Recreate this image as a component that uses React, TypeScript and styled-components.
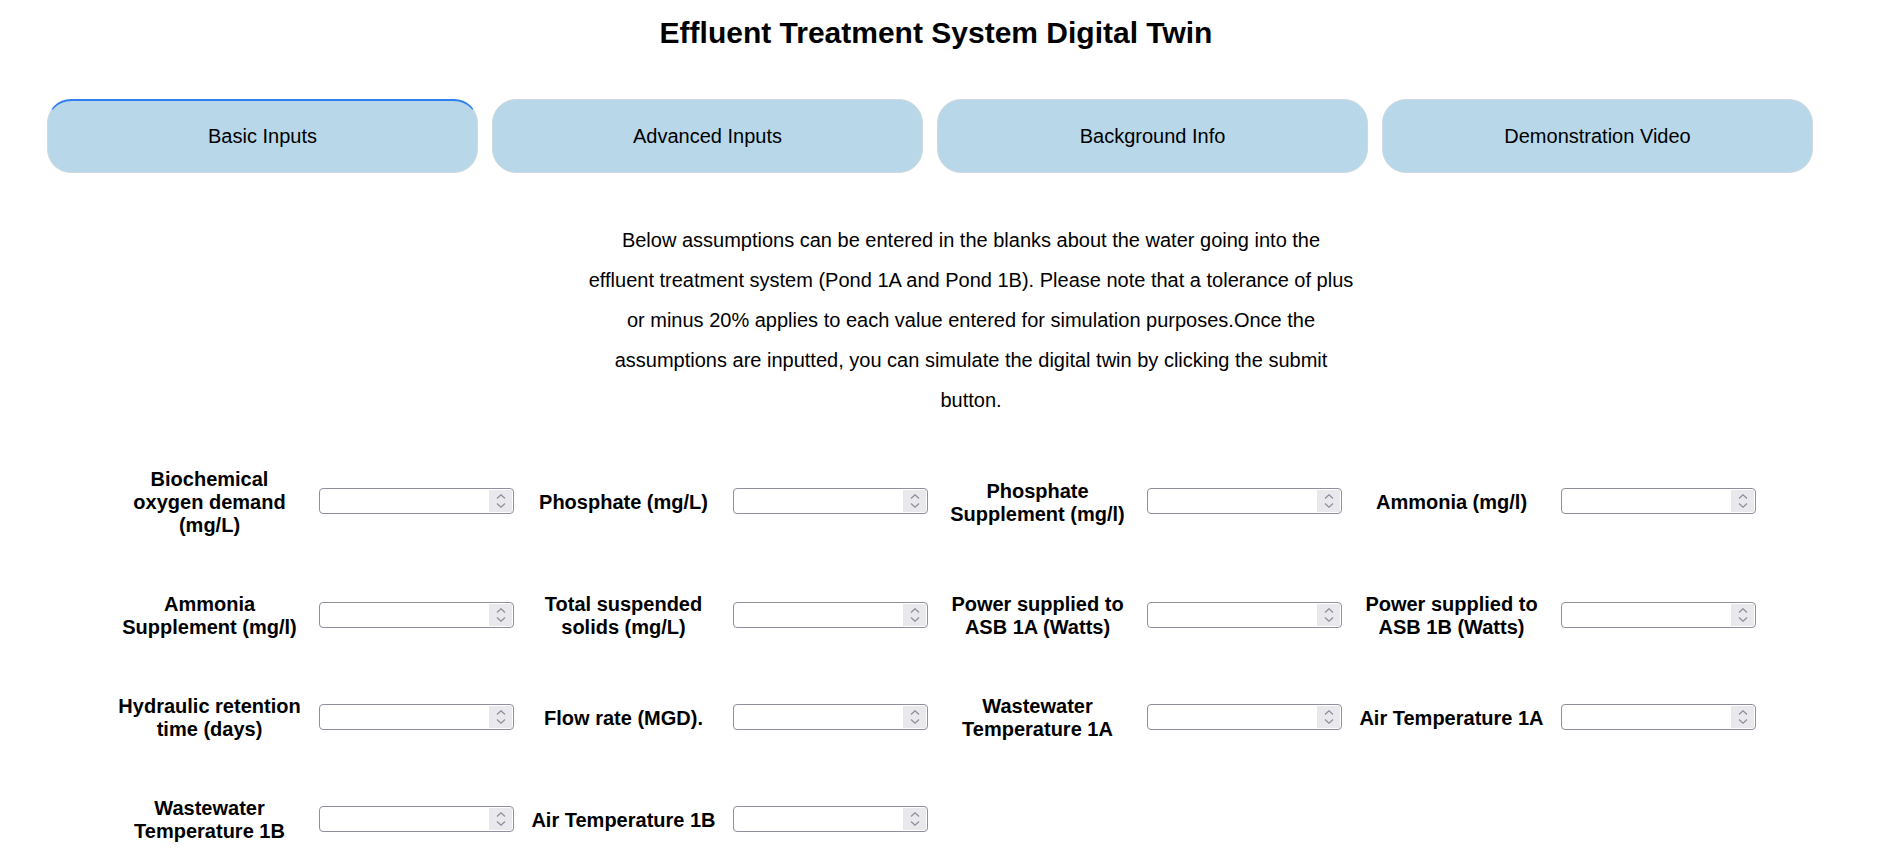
import React from "react"
import styled, { createGlobalStyle } from "styled-components"

// Styles
const GlobalStyle = createGlobalStyle`
  html, body {
    margin: 0;
    padding: 0;
    background: #ffffff;
  }

  body {
    font-family: "Liberation Sans", Arial, sans-serif;
    color: #000000;
  }
`

const Page = styled.div`
  display: flex;
  flex-direction: column;
  padding-bottom: 20px;
`

const Title = styled.h1`
  margin: 16px 0 0;
  padding-right: 6px;
  font-size: 30px;
  line-height: 34px;
  font-weight: 700;
  text-align: center;
`

const TabBar = styled.div`
  display: flex;
  gap: 14px;
  margin: 49px 65px 0 47px;
`

const Tab = styled.button<{ $active?: boolean }>`
  flex: 1;
  box-sizing: border-box;
  height: 74px;
  padding: 0;
  border: 1px solid #cfd9df;
  border-top: ${(props) =>
    props.$active ? "2px solid #2f7ff0" : "1px solid #cfd9df"};
  border-radius: 24px;
  background: #b8d8ea;
  color: #000000;
  font-family: inherit;
  font-size: 20px;
  cursor: pointer;
`

const Intro = styled.p`
  box-sizing: border-box;
  width: 766px;
  margin: 47px 0 0 calc(50% - 351px);
  font-size: 20px;
  line-height: 40px;
  text-align: center;
`

const FormGrid = styled.div`
  display: grid;
  grid-template-columns: repeat(4, 219px 195px);
  row-gap: 53px;
  align-items: center;
  margin: 45px 0 0 100px;
`

const Label = styled.label`
  box-sizing: border-box;
  padding: 3px 15px 0;
  font-size: 20px;
  line-height: 23px;
  font-weight: 700;
  text-align: center;
`

const NumberField = styled.div`
  display: flex;
  box-sizing: border-box;
  width: 195px;
  height: 26px;
  padding: 1px;
  border: 1px solid #8f8f9d;
  border-radius: 4px;
  background: #ffffff;
`

const FieldInput = styled.input`
  flex: 1;
  min-width: 0;
  padding: 0 4px;
  border: none;
  outline: none;
  background: transparent;
  font-family: inherit;
  font-size: 13px;
`

const Spinner = styled.span`
  display: flex;
  flex-direction: column;
  align-items: center;
  justify-content: center;
  gap: 4px;
  width: 23px;
  background: #e9e9ed;
`

// Constants
const tabs = [
  "Basic Inputs",
  "Advanced Inputs",
  "Background Info",
  "Demonstration Video",
]

const fields = [
  "Biochemical oxygen demand (mg/L)",
  "Phosphate (mg/L)",
  "Phosphate Supplement (mg/l)",
  "Ammonia (mg/l)",
  "Ammonia Supplement (mg/l)",
  "Total suspended solids (mg/L)",
  "Power supplied to ASB 1A (Watts)",
  "Power supplied to ASB 1B (Watts)",
  "Hydraulic retention time (days)",
  "Flow rate (MGD).",
  "Wastewater Temperature 1A",
  "Air Temperature 1A",
  "Wastewater Temperature 1B",
  "Air Temperature 1B",
]

const Chevron = ({ up }: { up?: boolean }) => (
  <svg width="10" height="5" viewBox="0 0 10 5">
    <polyline
      points={up ? "1,4.5 5,0.8 9,4.5" : "1,0.5 5,4.2 9,0.5"}
      fill="none"
      stroke="#8f8f9d"
      strokeWidth="1.3"
    />
  </svg>
)

const App = () => {
  return (
    <Page>
      <GlobalStyle />
      <Title>Effluent Treatment System Digital Twin</Title>
      <TabBar>
        {tabs.map((tab, i) => (
          <Tab key={tab} $active={i === 0}>
            {tab}
          </Tab>
        ))}
      </TabBar>
      <Intro>
        Below assumptions can be entered in the blanks about the water going
        into the effluent treatment system (Pond 1A and Pond 1B). Please note
        that a tolerance of plus or minus 20% applies to each value entered for
        simulation purposes.Once the assumptions are inputted, you can simulate
        the digital twin by clicking the submit button.
      </Intro>
      <FormGrid>
        {fields.map((field) => (
          <React.Fragment key={field}>
            <Label>{field}</Label>
            <NumberField>
              <FieldInput type="text" inputMode="decimal" />
              <Spinner>
                <Chevron up />
                <Chevron />
              </Spinner>
            </NumberField>
          </React.Fragment>
        ))}
      </FormGrid>
    </Page>
  )
}

export default App
